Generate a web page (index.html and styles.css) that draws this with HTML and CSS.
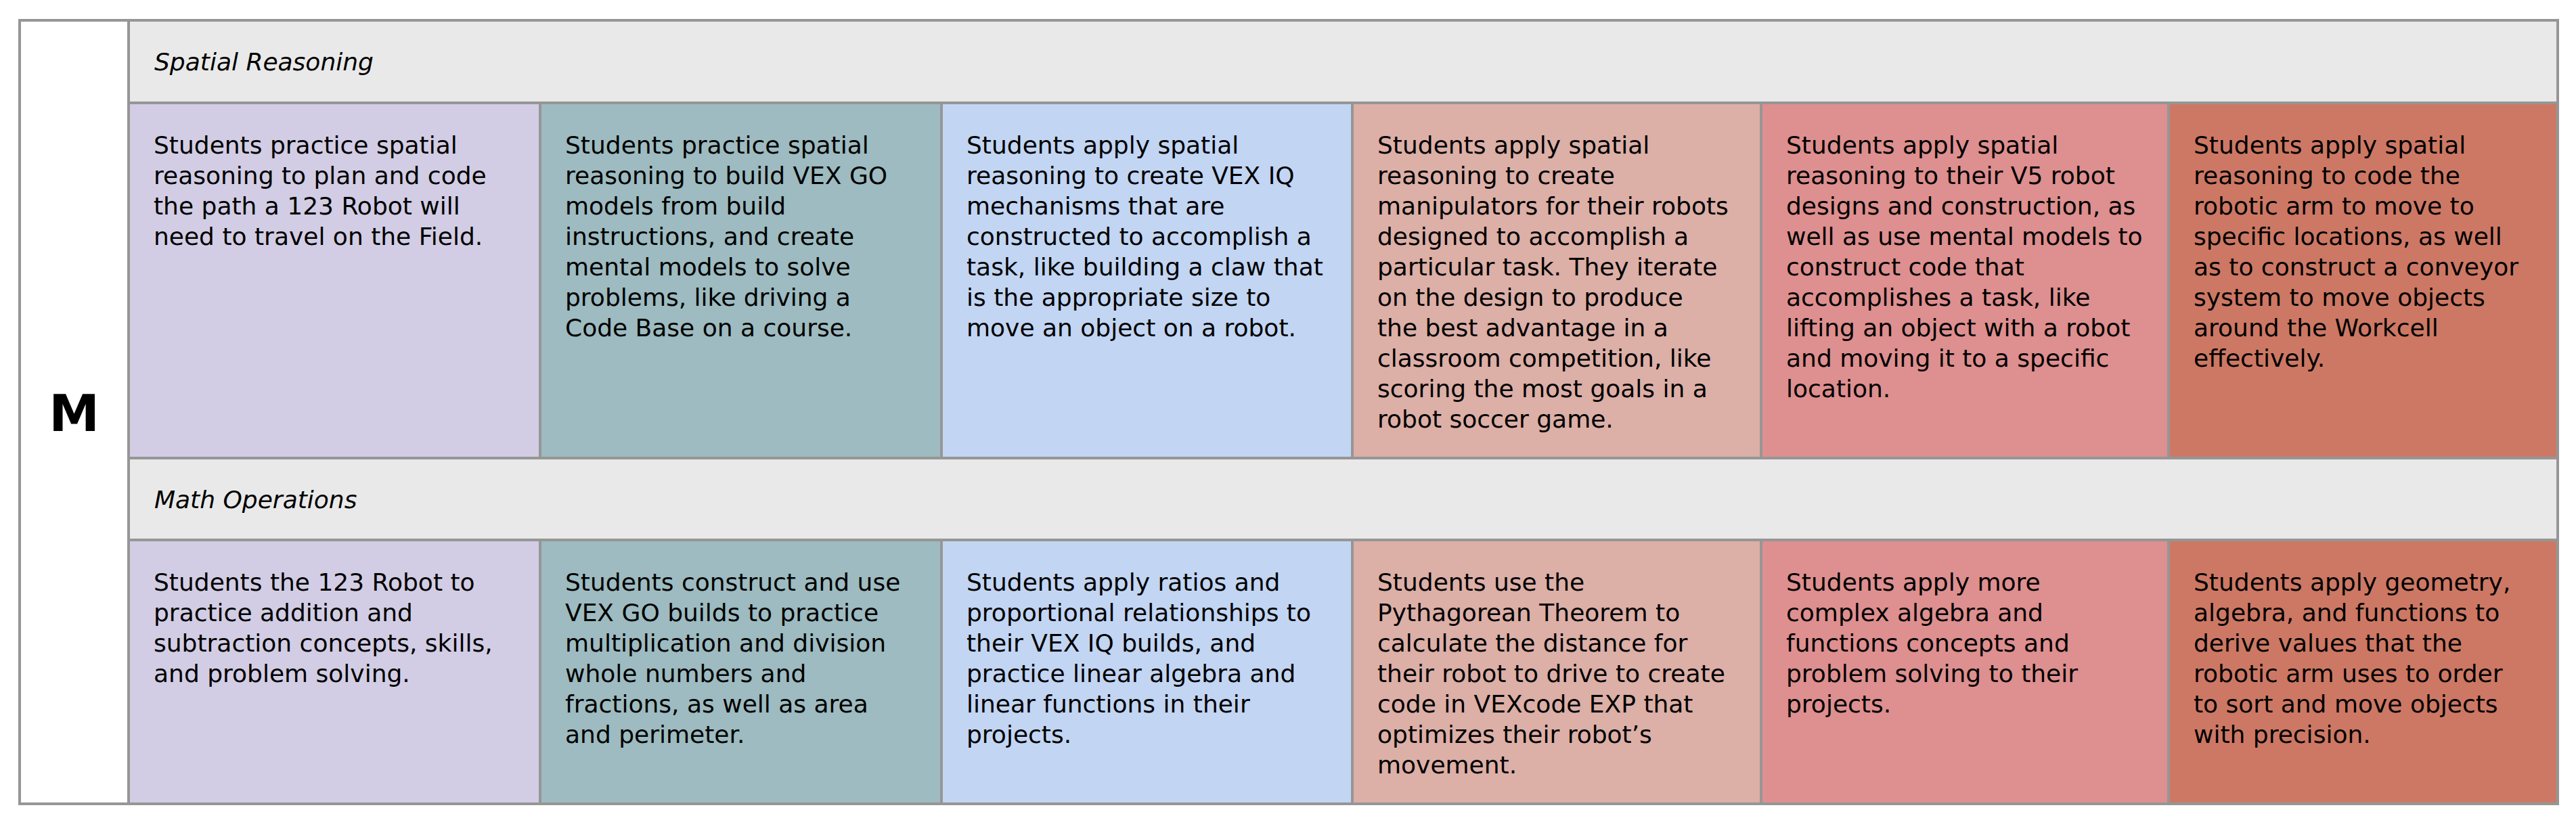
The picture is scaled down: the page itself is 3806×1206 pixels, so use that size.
FILE: index.html
```html
<!DOCTYPE html>
<html lang="en">
<head>
<meta charset="utf-8">
<title>Math – M</title>
<link rel="stylesheet" href="styles.css">
</head>
<body>
<div class="sheet">
  <div class="grid">
    <div class="level">M</div>

    <div class="strand">Spatial Reasoning</div>
    <div class="cell c1">Students practice spatial<br>reasoning to plan and code<br>the path a 123 Robot will<br>need to travel on the Field.</div>
    <div class="cell c2">Students practice spatial<br>reasoning to build VEX GO<br>models from build<br>instructions, and create<br>mental models to solve<br>problems, like driving a<br>Code Base on a course.</div>
    <div class="cell c3">Students apply spatial<br>reasoning to create VEX IQ<br>mechanisms that are<br>constructed to accomplish a<br>task, like building a claw that<br>is the appropriate size to<br>move an object on a robot.</div>
    <div class="cell c4">Students apply spatial<br>reasoning to create<br>manipulators for their robots<br>designed to accomplish a<br>particular task. They iterate<br>on the design to produce<br>the best advantage in a<br>classroom competition, like<br>scoring the most goals in a<br>robot soccer game.</div>
    <div class="cell c5">Students apply spatial<br>reasoning to their V5 robot<br>designs and construction, as<br>well as use mental models to<br>construct code that<br>accomplishes a task, like<br>lifting an object with a robot<br>and moving it to a specific<br>location.</div>
    <div class="cell c6">Students apply spatial<br>reasoning to code the<br>robotic arm to move to<br>specific locations, as well<br>as to construct a conveyor<br>system to move objects<br>around the Workcell<br>effectively.</div>

    <div class="strand">Math Operations</div>
    <div class="cell c1">Students the 123 Robot to<br>practice addition and<br>subtraction concepts, skills,<br>and problem solving.</div>
    <div class="cell c2">Students construct and use<br>VEX GO builds to practice<br>multiplication and division<br>whole numbers and<br>fractions, as well as area<br>and perimeter.</div>
    <div class="cell c3">Students apply ratios and<br>proportional relationships to<br>their VEX IQ builds, and<br>practice linear algebra and<br>linear functions in their<br>projects.</div>
    <div class="cell c4">Students use the<br>Pythagorean Theorem to<br>calculate the distance for<br>their robot to drive to create<br>code in VEXcode EXP that<br>optimizes their robot’s<br>movement.</div>
    <div class="cell c5">Students apply more<br>complex algebra and<br>functions concepts and<br>problem solving to their<br>projects.</div>
    <div class="cell c6">Students apply geometry,<br>algebra, and functions to<br>derive values that the<br>robotic arm uses to order<br>to sort and move objects<br>with precision.</div>
  </div>
</div>
</body>
</html>
```

FILE: styles.css
```css
html, body {
  margin: 0;
  padding: 0;
  background: #ffffff;
}

body {
  font-family: "DejaVu Sans", "Liberation Sans", sans-serif;
  color: #000000;
}

.sheet {
  padding: 28px 25px 0 27px;
}

.grid {
  display: grid;
  grid-template-columns: 157px 604px 589px 603px 600px 598px 571px;
  grid-template-rows: 118px 521px 117px 386px;
  gap: 4px;
  padding: 4px;
  background: #969696;
  width: max-content;
}

.level {
  grid-column: 1;
  grid-row: 1 / span 4;
  background: #ffffff;
  display: flex;
  align-items: center;
  justify-content: center;
  font-weight: bold;
  font-size: 75px;
  line-height: 1;
  padding-top: 4px;
}

.strand {
  grid-column: 2 / span 6;
  background: #e9e9e9;
  font-style: italic;
  font-size: 36px;
  line-height: 45px;
  padding: 37px 0 0 36px;
  white-space: nowrap;
}

.cell {
  font-size: 36px;
  line-height: 45px;
  padding: 38px 10px 0 35px;
  white-space: nowrap;
}

.c1 { background: #d2cde4; }
.c2 { background: #9dbbc0; }
.c3 { background: #c2d5f3; }
.c4 { background: #dcafa7; }
.c5 { background: #de8f8f; }
.c6 { background: #cd7864; }
```
